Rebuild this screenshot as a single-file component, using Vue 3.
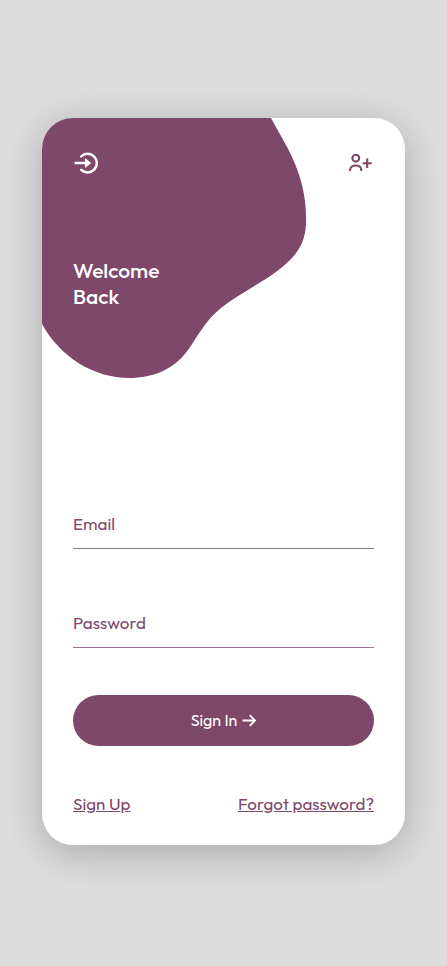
<script setup>
import { ref } from 'vue'

const email = ref('')
const password = ref('')
</script>

<template>
  <main class="page">
    <section class="card">
      <svg class="blob" viewBox="0 0 264 260" aria-hidden="true">
        <path
          d="M0 0H229C237 15 244 26 250 39C259 58 264 79 264 98C265 118 259 131 249 141C231 160 202 172 179 190C163 203 156 218 146 232C132 251 112 260 87 260C52 260 18 239 0 206Z"
        />
      </svg>

      <header class="top">
        <nav class="bar" aria-label="Account">
          <a class="icon-link light" href="#signin" aria-label="Sign in">
            <svg class="icon" viewBox="0 0 26 26" fill="none" stroke="currentColor" stroke-width="2.5">
              <path d="M8.2 7.3A9.3 9.3 0 1 1 8.2 20.9" stroke-linecap="round" />
              <path d="M1.6 14.1H13" />
              <path d="M12 9.1 18.3 14.1 12 19.1Z" fill="currentColor" stroke="none" />
            </svg>
          </a>
          <a class="icon-link" href="#signup" aria-label="Create account">
            <svg class="icon" viewBox="0 0 26 26" fill="none" stroke="currentColor" stroke-width="2.1">
              <circle cx="7.8" cy="9.2" r="3.4" />
              <path d="M2.1 22V21.2C2.1 18.2 4.1 16.5 7.7 16.5S13.3 18.2 13.3 21.2V22" />
              <path d="M19.2 9.4V19M14.6 14.2H23.8" />
            </svg>
          </a>
        </nav>
        <h1 class="title">Welcome<br />Back</h1>
      </header>

      <form class="form" @submit.prevent>
        <div class="fields">
          <div class="field">
            <label for="email">Email</label>
            <input id="email" v-model="email" type="email" autocomplete="email" />
          </div>
          <div class="field">
            <label for="password">Password</label>
            <input id="password" v-model="password" type="password" autocomplete="current-password" />
          </div>
        </div>
        <button class="submit" type="submit">
          Sign In
          <svg class="arrow" viewBox="0 0 14 14" fill="none" stroke="currentColor" stroke-width="1.8" aria-hidden="true">
            <path d="M.5 7.5H13M7.8 2.2 13 7.5 7.8 12.8" />
          </svg>
        </button>
      </form>

      <footer class="links">
        <a href="#signup">Sign Up</a>
        <a href="#forgot">Forgot password?</a>
      </footer>
    </section>
  </main>
</template>

<style>
body {
  margin: 0;
  background: #dddddd;
}
</style>

<style scoped>
.page {
  --plum: #7e486b;
  box-sizing: border-box;
  min-height: 100vh;
  padding: 16px 42px 20px;
  display: flex;
  align-items: center;
  justify-content: center;
  font-family: Outfit, Lato, sans-serif;
  font-size: 17px;
  line-height: 20px;
  color: var(--plum);
}

.card {
  position: relative;
  overflow: hidden;
  box-sizing: border-box;
  width: 100%;
  max-width: 420px;
  padding: 31px;
  border-radius: 31px;
  background: #ffffff;
  box-shadow: 0 8px 40px rgba(0, 0, 0, 0.24);
}

.blob {
  position: absolute;
  top: 0;
  left: 0;
  width: 264px;
  fill: var(--plum);
}

.top {
  position: relative;
}

.bar {
  display: flex;
  justify-content: space-between;
}

.icon-link {
  display: flex;
  color: var(--plum);
}

.light {
  color: #ffffff;
}

.icon {
  width: 26px;
  height: 26px;
}

.title {
  margin: 82px 0 0;
  font-size: 21px;
  line-height: 26px;
  font-weight: 500;
  color: #ffffff;
}

.form {
  display: flex;
  flex-direction: column;
  gap: 47px;
  margin-top: 181px;
}

.fields {
  display: flex;
  flex-direction: column;
  gap: 40px;
}

.field {
  position: relative;
}

.field label {
  position: absolute;
  top: 24px;
  left: 0;
}

.field input {
  display: block;
  box-sizing: border-box;
  width: 100%;
  height: 59px;
  padding: 24px 0 14px;
  border: 0;
  border-bottom: 1px solid #9b7390;
  border-radius: 0;
  outline: 0;
  background: transparent;
  color: inherit;
  font: inherit;
}

.field input:focus {
  border-bottom-color: var(--plum);
}

.submit {
  display: flex;
  align-items: center;
  justify-content: center;
  gap: 5px;
  height: 51px;
  padding: 0 24px;
  border: 0;
  border-radius: 26px;
  background: var(--plum);
  color: #ffffff;
  font: inherit;
  font-size: 16px;
  cursor: pointer;
}

.arrow {
  width: 14px;
  height: 14px;
}

.links {
  display: flex;
  justify-content: space-between;
  margin-top: 48px;
}

.links a {
  color: inherit;
}
</style>
